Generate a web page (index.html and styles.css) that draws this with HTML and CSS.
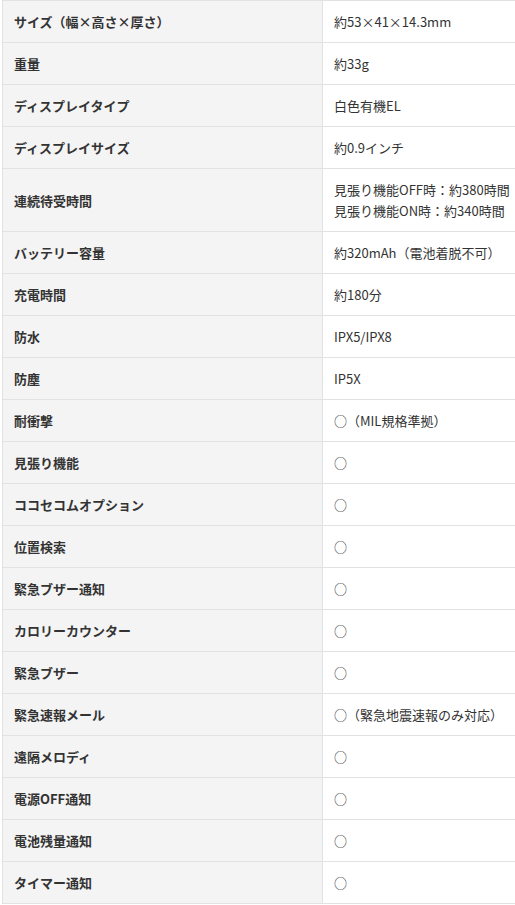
FILE: index.html
```html
<!DOCTYPE html>
<html lang="ja">
<head>
<meta charset="utf-8">
<link rel="stylesheet" href="styles.css">
</head>
<body>
<div class="wrap">
<table class="spec">
<tbody>
<tr><th>サイズ（幅×高さ×厚さ）</th><td>約53×41×14.3mm</td></tr>
<tr><th>重量</th><td>約33g</td></tr>
<tr><th>ディスプレイタイプ</th><td>白色有機EL</td></tr>
<tr><th>ディスプレイサイズ</th><td>約0.9インチ</td></tr>
<tr><th>連続待受時間</th><td>見張り機能OFF時：約380時間<br>見張り機能ON時：約340時間</td></tr>
<tr><th>バッテリー容量</th><td>約320mAh（電池着脱不可）</td></tr>
<tr><th>充電時間</th><td>約180分</td></tr>
<tr><th>防水</th><td>IPX5/IPX8</td></tr>
<tr><th>防塵</th><td>IP5X</td></tr>
<tr><th>耐衝撃</th><td>○（MIL規格準拠）</td></tr>
<tr><th>見張り機能</th><td>○</td></tr>
<tr><th>ココセコムオプション</th><td>○</td></tr>
<tr><th>位置検索</th><td>○</td></tr>
<tr><th>緊急ブザー通知</th><td>○</td></tr>
<tr><th>カロリーカウンター</th><td>○</td></tr>
<tr><th>緊急ブザー</th><td>○</td></tr>
<tr><th>緊急速報メール</th><td>○（緊急地震速報のみ対応）</td></tr>
<tr><th>遠隔メロディ</th><td>○</td></tr>
<tr><th>電源OFF通知</th><td>○</td></tr>
<tr><th>電池残量通知</th><td>○</td></tr>
<tr><th>タイマー通知</th><td>○</td></tr>
</tbody>
</table>
</div>
</body>
</html>
```
FILE: styles.css
```css
html, body {
  margin: 0;
  padding: 0;
  background: #fff;
}
.wrap {
  padding: 0 0 0 2px;
  width: 530px;
}
.spec {
  border-collapse: collapse;
  width: 526px;
  font-family: "Noto Sans CJK JP", "Noto Sans", sans-serif;
  font-size: 13px;
  line-height: 21px;
  color: #333;
}
.spec th,
.spec td {
  border: 1px solid #e2e2e2;
  padding: 10px 10px 10px 11px;
  text-align: left;
  vertical-align: middle;
}
.spec th {
  width: 298px;
  background: #f4f4f4;
  font-weight: bold;
}
.spec td {
  background: #fff;
  font-weight: normal;
}
```
